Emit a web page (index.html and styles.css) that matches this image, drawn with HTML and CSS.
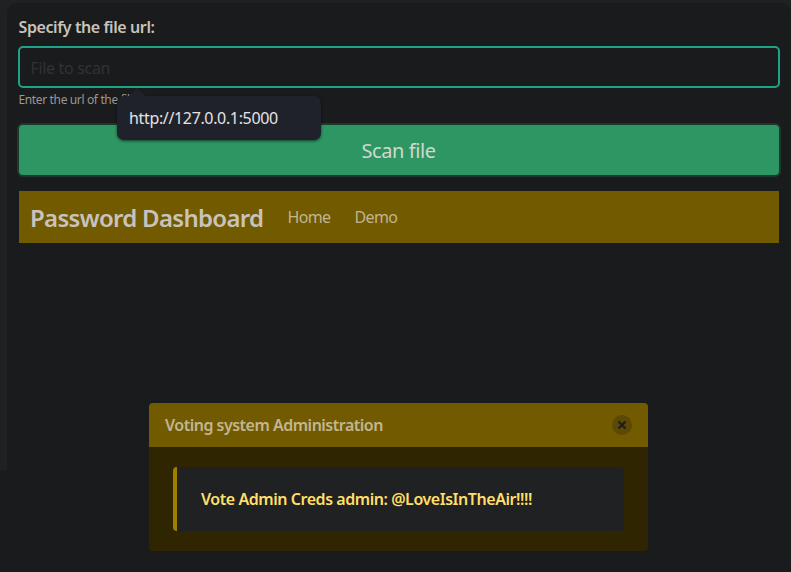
FILE: index.html
```html
<!DOCTYPE html>
<html lang="en">
<head>
<meta charset="utf-8">
<title>Password Dashboard</title>
<link rel="stylesheet" href="styles.css">
</head>
<body>
<div class="page">
  <main class="box">
    <form class="form">
      <label class="label" for="url">Specify the file url:</label>
      <div class="control">
        <input class="input" id="url" type="text" placeholder="File to scan">
        <div class="tooltip">http://127.0.0.1:5000</div>
      </div>
      <p class="help">Enter the url of the file</p>
      <button class="button" type="button">Scan file</button>
    </form>
    <nav class="navbar">
      <span class="brand">Password Dashboard</span>
      <a class="nav-item">Home</a>
      <a class="nav-item">Demo</a>
    </nav>
    <article class="message">
      <header class="message-header">
        <p class="title">Voting system Administration</p>
        <span class="delete"><svg width="20" height="20" viewBox="0 0 20 20"><path d="M6.5 6.5l7 7M13.5 6.5l-7 7"/></svg></span>
      </header>
      <div class="message-body">
        <blockquote class="creds"><strong>Vote Admin Creds admin: @LoveIsInTheAir!!!!</strong></blockquote>
      </div>
    </article>
  </main>
</div>
</body>
</html>
```
FILE: styles.css
```css
* { box-sizing: border-box; }
body {
  margin: 0;
  width: 791px;
  height: 572px;
  overflow: hidden;
  background: #1a1b1c;
  color: #c8c3bc;
  font: 16px/24px "Noto Sans", sans-serif;
}
.page { height: 470px; padding: 3px 0 0 7px; background: #1f2122; }
.box { height: 569px; padding: 12px 12px 0; border-radius: 10px 10px 0 0; background: #1a1b1c; }
p, blockquote { margin: 0; }
.label { display: block; height: 31px; margin-left: -0.5px; font-weight: 600; letter-spacing: -0.4px; }
.control { position: relative; margin: 0 -1px; }
.input {
  display: block;
  width: 100%;
  height: 42px;
  padding: 1px 10.5px 0;
  border: 2px solid #1fa386;
  border-radius: 5px;
  outline: 0;
  background: #1a1b1c;
  color: #c8c3bc;
  font: inherit;
  letter-spacing: -0.33px;
}
.input::placeholder { color: #303335; opacity: 1; }
.help {
  height: 37px;
  margin-left: -0.5px;
  padding-top: 4px;
  color: #9c9891;
  font-size: 12px;
  line-height: 16px;
  letter-spacing: -0.36px;
}
.button {
  display: block;
  width: 100%;
  height: 50px;
  padding: 2px 1px 0 0;
  border: 0;
  border-radius: 4px;
  background: #2e9663;
  box-shadow: 0 0 0 2px #1e392c;
  color: #d1d8d0;
  font: 20px/30px "Noto Sans", sans-serif;
  letter-spacing: -0.4px;
}
.tooltip {
  position: absolute;
  z-index: 2;
  left: 99px;
  top: 50px;
  width: 204px;
  height: 44px;
  padding: 10px 12px;
  border-radius: 7px;
  background: #20222b;
  box-shadow: 0 1px 3px rgba(0, 0, 0, .6);
  color: #e4e4e2;
  letter-spacing: -0.35px;
}
.tooltip::before {
  content: "";
  position: absolute;
  left: 12px;
  top: -8px;
  border: solid transparent;
  border-width: 0 8px 8px;
  border-bottom-color: #20222b;
}
.navbar {
  display: flex;
  align-items: center;
  height: 52px;
  margin-top: 16px;
  padding-left: 11px;
  background: #725a00;
}
.brand { width: 257.5px; padding-top: 2px; font-size: 24px; font-weight: 600; letter-spacing: -0.7px; white-space: nowrap; }
.nav-item { width: 67px; color: #c2b48e; letter-spacing: -0.65px; }
.message {
  width: 499px;
  height: 148px;
  margin: 160px 0 0 130px;
  overflow: hidden;
  border-radius: 4px;
  background: #2f2500;
}
.message-header {
  display: flex;
  align-items: center;
  justify-content: space-between;
  height: 44px;
  padding: 0 16px;
  background: #725a00;
}
.title { color: #c2b58f; font-weight: 600; letter-spacing: -0.5px; }
.delete { width: 20px; height: 20px; border-radius: 50%; background: #5b4904; }
.delete svg { display: block; fill: none; stroke: #1c1e20; stroke-width: 2.3; }
.message-body { padding: 20px 24px; }
.creds {
  height: 64px;
  padding: 20px 24px;
  border-left: 4px solid #a17e00;
  border-radius: 4px;
  background: #1f2122;
  color: #ffdf68;
}
.creds strong { font-weight: 600; letter-spacing: -0.45px; white-space: nowrap; }
```
